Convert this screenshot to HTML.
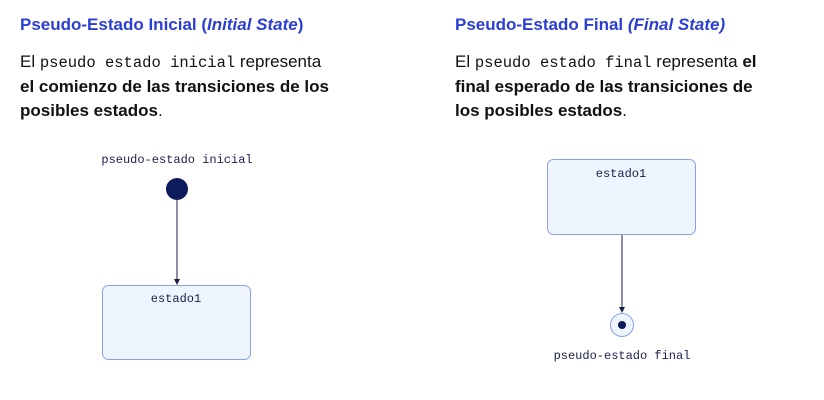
<!DOCTYPE html>
<html><head><meta charset="utf-8"><style>
body{margin:0;width:824px;height:400px;background:#fff;position:relative;font-family:"Liberation Sans",sans-serif;overflow:hidden}
.t{position:absolute;color:#2b3fd4;font-weight:bold;font-size:17px}
.p{position:absolute;color:#111;font-size:17px;line-height:24px}
.p code{font-family:"Liberation Mono",monospace;font-size:15.5px}
</style></head><body>
<div class="t" style="left:20px;top:15px">Pseudo-Estado Inicial (<i>Initial State</i>)</div>
<div class="p" style="left:20px;top:50px;width:360px">El <code>pseudo estado inicial</code> representa<br><b>el comienzo de las transiciones de los<br>posibles estados</b>.</div>
<div class="t" style="left:455px;top:15px">Pseudo-Estado Final <i>(Final State)</i></div>
<div class="p" style="left:455px;top:50px;width:360px">El <code>pseudo estado final</code> representa <b>el<br>final esperado de las transiciones de<br>los posibles estados</b>.</div>
<svg width="824" height="400" style="position:absolute;left:0;top:0" font-family="Liberation Mono, monospace" font-size="12" fill="#1a1f4a">
<text x="177" y="163" text-anchor="middle" fill="#1a1f4a">pseudo-estado inicial</text>
<circle cx="177" cy="189" r="11" fill="#0d1a5c"/>
<line x1="177" y1="200" x2="177" y2="281" stroke="#1a1f4a" stroke-width="1"/>
<path d="M174 279 L177 285 L180 279 Z" fill="#1a1f4a"/>
<rect x="102.5" y="285.5" width="148" height="74" rx="6" fill="#eef5fe" stroke="#8aa0e8"/>
<text x="176" y="302" text-anchor="middle">estado1</text>
<rect x="547.5" y="159.5" width="148" height="75" rx="6" fill="#eef5fe" stroke="#8aa0e8"/>
<text x="621" y="177" text-anchor="middle">estado1</text>
<line x1="622" y1="235" x2="622" y2="309" stroke="#1a1f4a"/>
<path d="M619 307 L622 313 L625 307 Z" fill="#1a1f4a"/>
<circle cx="622" cy="325" r="11.5" fill="#eef5fe" stroke="#8aa0e8"/>
<circle cx="622" cy="325" r="4" fill="#0d1a5c"/>
<text x="622" y="359" text-anchor="middle">pseudo-estado final</text>
</svg>
</body></html>
